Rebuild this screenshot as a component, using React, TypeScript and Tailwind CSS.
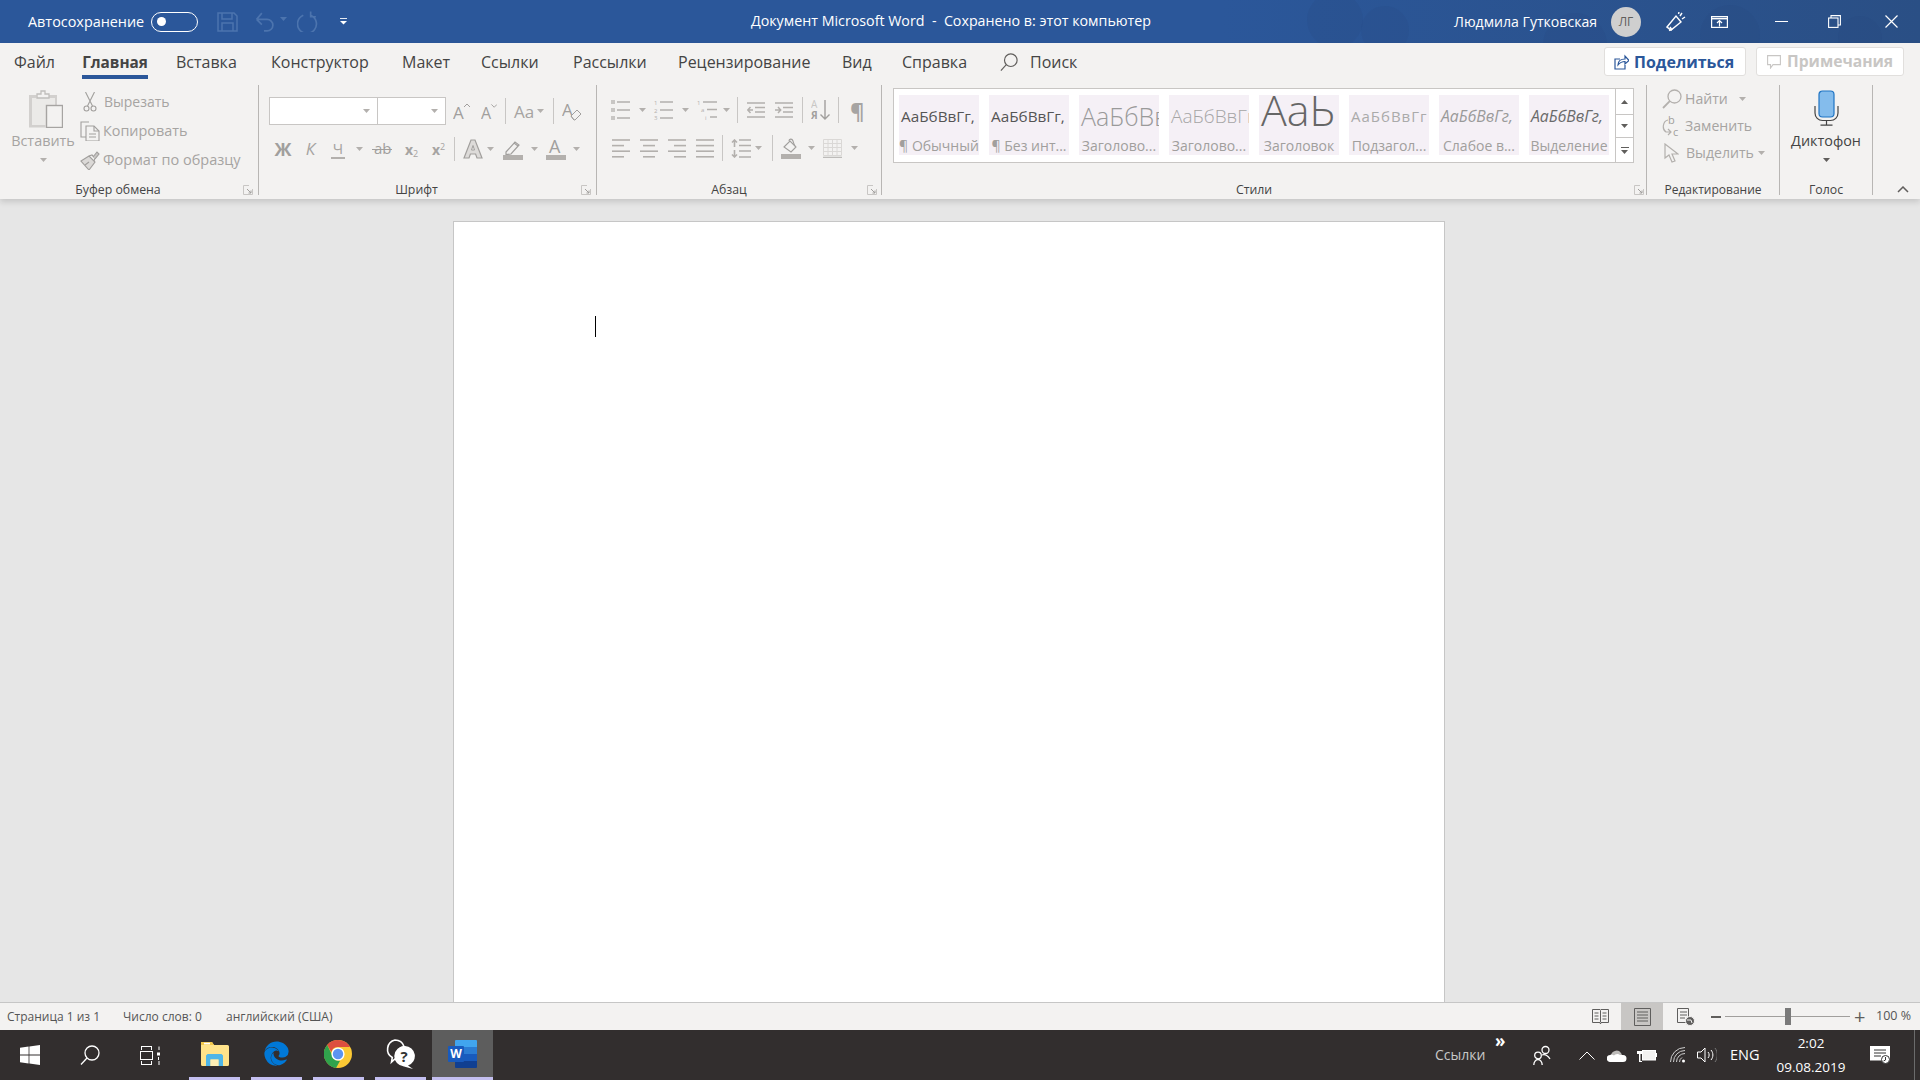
import React from "react";
import { FaEdge } from "react-icons/fa";

type P = { className?: string };
const G = "#b3b0ad";
const D = "#a19f9d";

function Caret({ className = "", color = G }: P & { color?: string }) {
  return (
    <svg viewBox="0 0 7 4" className={`w-[7px] h-[4px] shrink-0 ${className}`}>
      <path d="M0 0h7L3.5 4z" fill={color} />
    </svg>
  );
}
function Sep({ className = "" }: P) {
  return <i className={`block w-px bg-[#c8c6c4] shrink-0 ${className}`} />;
}
function Launcher({ className = "" }: P) {
  return (
    <svg viewBox="0 0 10 10" className={`absolute bottom-0 w-[10px] h-[10px] ${className}`} fill="none" stroke="#c8c6c4">
      <path d="M9.5 4V9.5H.5V.5H6" />
      <path d="M4 4l4 4M8 5.5V8H5.5" stroke="#a19f9d" />
    </svg>
  );
}

function Save({ className = "" }: P) {
  return (
    <svg viewBox="0 0 21 20" className={className} fill="none" stroke="#4c74ae" strokeWidth="1.5">
      <path d="M1 1h16l3 3v15H1z" />
      <path d="M5 1v6h10V1M5 19v-8h11v8" />
    </svg>
  );
}
function Undo({ className = "" }: P) {
  return (
    <svg viewBox="0 0 18 20" className={className} fill="none" stroke="#4c74ae" strokeWidth="1.6">
      <path d="M1 8h10a5.5 5.5 0 0 1 0 11H8M1 8l5-6M1 8l5 5" />
    </svg>
  );
}
function Redo({ className = "" }: P) {
  return (
    <svg viewBox="0 0 20 20" className={className} fill="none" stroke="#4c74ae" strokeWidth="1.6">
      <path d="M13 3.500a9 9 0 1 1-7 0M13 0v5h5" transform="translate(0 .5)" />
    </svg>
  );
}
function Customize({ className = "" }: P) {
  return (
    <svg viewBox="0 0 8 8" className={className} fill="#ffffff">
      <rect y="0" width="8" height="1" />
      <path d="M0 3.500h8L4 7.500z" />
    </svg>
  );
}
function Feedback({ className = "" }: P) {
  return (
    <svg viewBox="0 0 20 20" className={className} fill="none" stroke="#fff" strokeWidth="1.4">
      <path d="M1 15L10 4l5 6-10 8z" />
      <path d="M4 15l2 3M3 18.500l2-1" />
      <path d="M14 4l2-3M16 7l3-2M12.500 2l.5-2" />
    </svg>
  );
}
function RibbonDisplay({ className = "" }: P) {
  return (
    <svg viewBox="0 0 17 12" className={className} fill="none" stroke="#fff" strokeWidth="1.2">
      <rect x=".6" y=".6" width="15.800" height="10.800" />
      <path d="M.6 2.600h15.800" strokeWidth="1.6" />
      <path d="M8.500 10.500V4.500M6 7l2.500-2.500L11 7" />
    </svg>
  );
}
function Minimize({ className = "" }: P) {
  return <i className={`block bg-white ${className}`} />;
}
function Restore({ className = "" }: P) {
  return (
    <svg viewBox="0 0 13 13" className={className} fill="none" stroke="#fff" strokeWidth="1.1">
      <rect x=".6" y="3" width="9.400" height="9.400" />
      <path d="M3 3V.6h9.400V10H10" />
    </svg>
  );
}
function Close({ className = "" }: P) {
  return (
    <svg viewBox="0 0 13 13" className={className} fill="none" stroke="#fff" strokeWidth="1.2">
      <path d="M.5.5l12 12M12.500.5l-12 12" />
    </svg>
  );
}

function Clipboard({ className = "" }: P) {
  return (
    <svg viewBox="0 0 34 38" className={className} fill="none">
      <path d="M1.500 6.500h6M20 6.500h6.500V16" stroke="#d2d0ce" strokeWidth="3" />
      <path d="M1.500 5v31h15" stroke="#d2d0ce" strokeWidth="3" />
      <path d="M3 8h23v27H3z" fill="#ebeae8" />
      <path d="M8 6V4h4V1h4v3h4v4H8z" fill="#f3f2f1" stroke="#c0bebc" strokeWidth="1.3" />
      <rect x="17.500" y="15.500" width="16" height="22" fill="#f3f2f1" stroke="#a6a4a2" strokeWidth="1.4" />
    </svg>
  );
}
function Scissors({ className = "" }: P) {
  return (
    <svg viewBox="0 0 14 20" className={className} fill="none" stroke={D} strokeWidth="1.1">
      <path d="M2.500 0L9.500 14M11.500 0L4.500 14" />
      <circle cx="3.500" cy="16.500" r="2.500" />
      <circle cx="10.500" cy="16.500" r="2.500" />
    </svg>
  );
}
function Copy({ className = "" }: P) {
  return (
    <svg viewBox="0 0 20 20" className={className} fill="none" stroke={D} strokeWidth="1.1">
      <path d="M9 1H1v15h5" />
      <path d="M6 5h8l5 5v10H6z" fill="#f3f2f1" />
      <path d="M14 5v5h5M9 13h7M9 16h7" />
    </svg>
  );
}
function Painter({ className = "" }: P) {
  return (
    <svg viewBox="0 0 20 20" className={className} fill="none" stroke={D} strokeWidth="1.1">
      <path d="M1 11l8-5 6 6-6 8z" fill="#dbd9d7" />
      <path d="M5 15l4-3M9 6l3-1 3 3-1 3" />
      <path d="M13 7l4-5 2 2-4 5" fill="#c8c6c4" />
    </svg>
  );
}
function Eraser({ className = "" }: P) {
  return (
    <svg viewBox="0 0 20 20" className={className} fill="none" stroke={D}>
      <text x="0" y="15" fontSize="17" fill={D} stroke="none">A</text>
      <path d="M9 15l6-6 4 4-6 6h-1z" fill="#f3f2f1" />
      <path d="M9 15l3 4" />
    </svg>
  );
}
function GrowA({ up, className = "" }: P & { up?: boolean }) {
  return (
    <svg viewBox="0 0 17 18" className={className} fill="none" stroke={D}>
      <text x="0" y="17" fontSize="17" fill={D} stroke="none">A</text>
      <path d={up ? "M11 5l3-3 3 3" : "M11 2l3 3 3-3"} />
    </svg>
  );
}
function Strike({ className = "" }: P) {
  return (
    <svg viewBox="0 0 20 16" className={className} fill="none" stroke={D}>
      <text x="2" y="13" fontSize="15" fill={D} stroke="none">ab</text>
      <path d="M0 8.500h20" />
    </svg>
  );
}
function OutlineA({ className = "" }: P) {
  return (
    <svg viewBox="0 0 20 20" className={className}>
      <path d="M1 19L8 1h4l7 18h-5l-1.400-4H7.400L6 19z" fill="#dddbd9" stroke={D} strokeWidth="1.2" />
      <path d="M8.500 11h3L10 6.500z" fill="#f3f2f1" stroke={D} />
    </svg>
  );
}
function Highlight({ className = "" }: P) {
  return (
    <svg viewBox="0 0 20 21" className={className} fill="none" stroke={D} strokeWidth="1.2">
      <path d="M3 13L12 3l4 3-8 9-5 .5z" />
      <path d="M11 4l4 3" />
      <rect x="0" y="16" width="20" height="5" fill="#b3b0ad" stroke="none" />
    </svg>
  );
}
function ColorA({ className = "" }: P) {
  return (
    <svg viewBox="0 0 20 21" className={className}>
      <text x="3" y="14" fontSize="18" fill={D}>A</text>
      <rect x="0" y="16" width="20" height="5" fill="#b3b0ad" />
    </svg>
  );
}
function Bullets({ className = "" }: P) {
  return (
    <svg viewBox="0 0 19 20" className={className} fill="none" stroke={G} strokeWidth="1.5">
      <path d="M6 2h13M6 10h13M6 18h13" />
      <path d="M0 0h4v4H0zM0 8h4v4H0zM0 16h4v4H0z" fill="#c8c6c4" stroke="none" />
    </svg>
  );
}
function Numbered({ className = "" }: P) {
  return (
    <svg viewBox="0 0 19 20" className={className} fill="none" stroke={G} strokeWidth="1.5">
      <path d="M6 2h13M6 10h13M6 18h13" />
      <text x="0" y="5" fontSize="6" fill={G} stroke="none">1</text>
      <text x="0" y="13" fontSize="6" fill={G} stroke="none">2</text>
      <text x="0" y="20" fontSize="6" fill={G} stroke="none">3</text>
    </svg>
  );
}
function Multi({ className = "" }: P) {
  return (
    <svg viewBox="0 0 20 20" className={className} fill="none" stroke={G} strokeWidth="1.5">
      <path d="M6 2h14M10 9.500h10M13 17h7" />
      <text x="0" y="5" fontSize="6" fill={G} stroke="none">1</text>
      <text x="4" y="12" fontSize="6" fill={G} stroke="none">a</text>
      <text x="8" y="20" fontSize="6" fill={G} stroke="none">i</text>
    </svg>
  );
}
function Indent({ out, className = "" }: P & { out?: boolean }) {
  return (
    <svg viewBox="0 0 18 16" className={className} fill="none" stroke={G} strokeWidth="1.5">
      <path d="M0 1h18M8 5.500h10M8 10h10M0 15h18" />
      {out ? <path d="M6 8H1M3.500 5L.8 8l2.700 3" /> : <path d="M0 8h5.500M3 5l2.700 3L3 11" />}
    </svg>
  );
}
function Sort({ className = "" }: P) {
  return (
    <svg viewBox="0 0 19 22" className={className} fill="none" stroke={G} strokeWidth="1.4">
      <text x="0" y="9" fontSize="10" fill="#c8c6c4" stroke="none">А</text>
      <text x="0" y="20" fontSize="10" fontWeight="700" fill={D} stroke="none">Я</text>
      <path d="M14 1v19M9.500 15.500L14 20l4.500-4.500" stroke={D} />
    </svg>
  );
}
function Align({ lines, className = "" }: P & { lines: [number, number][] }) {
  return (
    <svg viewBox="0 0 18 19" className={className} fill="none" stroke={G} strokeWidth="1.6">
      {lines.map((l, i) => (
        <path key={i} d={`M${l[0]} ${1 + i * 5.6}H${l[1]}`} />
      ))}
    </svg>
  );
}
function Spacing({ className = "" }: P) {
  return (
    <svg viewBox="0 0 20 19" className={className} fill="none" stroke={G} strokeWidth="1.6">
      <path d="M8 1h12M8 6.500h12M8 12h12M8 18h12" />
      <path d="M3.500 1v7M1 3.500L3.500 1 6 3.500M3.500 11v7M1 15.500L3.500 18 6 15.500" />
    </svg>
  );
}
function Fill({ className = "" }: P) {
  return (
    <svg viewBox="0 0 20 21" className={className} fill="none" stroke={D} strokeWidth="1.1">
      <path d="M3 9l6-6 6 6-5 5z" fill="#f3f2f1" />
      <path d="M8 3c0-2 3-3 4 0 .5 1.500.7 3 2 5" />
      <rect x="0" y="16" width="20" height="5" fill="#b3b0ad" stroke="none" />
    </svg>
  );
}
function Borders({ className = "" }: P) {
  return (
    <svg viewBox="0 0 19 19" className={className} fill="none" stroke="#dad8d6" strokeWidth="1">
      <path d="M.5.5h18v16H.5zM9.500.5v16M.5 8.500h18M5 .5v16M14 .5v16M.5 4.500h18M.5 12.500h18" />
      <path d="M0 18.500h19" stroke="#bdbbb9" strokeWidth="1.6" />
    </svg>
  );
}
function Find({ className = "" }: P) {
  return (
    <svg viewBox="0 0 20 20" className={className} fill="none" stroke={G} strokeWidth="1.3">
      <circle cx="12.500" cy="7.500" r="6.500" />
      <path d="M7.800 12.200L1 19" strokeWidth="1.8" />
    </svg>
  );
}
function Replace({ className = "" }: P) {
  return (
    <svg viewBox="0 0 20 22" className={className} fill="none" stroke={G} strokeWidth="1.2">
      <text x="6" y="9" fontSize="11" fill={D} stroke="none">b</text>
      <text x="11" y="21" fontSize="11" fill={D} stroke="none">c</text>
      <path d="M6 5C1 6-.5 14 4 17h5M6 14l3 3-3 3" />
    </svg>
  );
}
function Select({ className = "" }: P) {
  return (
    <svg viewBox="0 0 15 20" className={className} fill="#f3f2f1" stroke={G} strokeWidth="1.2">
      <path d="M1 1v14l4-3 3 7 3-1-3-7h6z" />
    </svg>
  );
}
function Mic({ className = "" }: P) {
  return (
    <svg viewBox="0 0 25 36" className={className}>
      <rect x="5" y="1" width="15" height="26" rx="3.500" fill="#84bcec" stroke="#1f74c4" strokeWidth="1.2" />
      <path d="M1 16v7a7.500 7.500 0 0 0 7.500 7.500h8A7.500 7.500 0 0 0 24 23v-7M12.500 30.500V35M6.500 35.200h12" fill="none" stroke="#444" strokeWidth="1.2" />
    </svg>
  );
}

function SearchIco({ className = "", stroke = "#605e5c" }: P & { stroke?: string }) {
  return (
    <svg viewBox="0 0 20 20" className={className} fill="none" stroke={stroke} strokeWidth="1.3">
      <circle cx="12" cy="8" r="7" />
      <path d="M7 13L1 19.500" />
    </svg>
  );
}
function Share({ className = "" }: P) {
  return (
    <svg viewBox="0 0 15 16" className={className} fill="none" stroke="#2b579a" strokeWidth="1.2">
      <path d="M6 5H1v10h10v-4" />
      <path d="M4 11c0-4 3-6 7-6V2l4 4.500L11 10V7.500c-3 0-5 1-7 3.500z" />
    </svg>
  );
}
function Comment({ className = "" }: P) {
  return (
    <svg viewBox="0 0 14 14" className={className} fill="none" stroke="#c8c6c4" strokeWidth="1.1">
      <path d="M.6.6h12.800v9H6L3.500 13V9.600H.6z" />
    </svg>
  );
}

function ReadIco({ className = "" }: P) {
  return (
    <svg viewBox="0 0 17 16" className={className} fill="none" stroke="#5f5e5d">
      <path d="M.5.5h7.500l.5 1 .5-1h7.500v13H9l-.5 1.500L8 13.500H.5z" />
      <path d="M2.500 4h4M2.500 7h4M2.500 10h4M10.500 4h4M10.500 7h4M10.500 10h4M8.500 2v11" />
    </svg>
  );
}
function PrintIco({ className = "" }: P) {
  return (
    <svg viewBox="0 0 17 18" className={className} fill="none" stroke="#5f5e5d">
      <path d="M.5.5h16v17H.5z" />
      <path d="M3 4h11M3 7h11M3 10h11M3 13h11" />
    </svg>
  );
}
function WebIco({ className = "" }: P) {
  return (
    <svg viewBox="0 0 18 18" className={className} fill="none" stroke="#5f5e5d">
      <path d="M.5.5h11v14H.5zM3 4h7M3 7h7M3 10h5" />
      <circle cx="13" cy="13" r="4.500" fill="#5f5e5d" stroke="#f3f2f1" />
      <path d="M10 12h4l1 3" stroke="#f3f2f1" />
    </svg>
  );
}

function WinLogo({ className = "" }: P) {
  return (
    <svg viewBox="0 0 20 20" className={className} fill="#fff">
      <path d="M0 2.800l8.600-1.200v7.900H0zM9.400 1.500L20 0v9.500H9.400zM0 10.400h8.600v8L0 17.200zM9.400 10.400H20V20L9.400 18.500z" />
    </svg>
  );
}
function TaskView({ className = "" }: P) {
  return (
    <svg viewBox="0 0 20 19" className={className} fill="none" stroke="#fff" strokeWidth="1">
      <path d="M1 .5h11M1.500 0v4M11.500 0v4M1 18.500h11M1.500 15v4M11.500 15v4" />
      <rect x=".5" y="5.500" width="12" height="8" />
      <path d="M19 .5V4M19 15v4" />
      <rect x="17" y="6.500" width="3" height="3" fill="#fff" stroke="none" />
      <path d="M18.500 11v3" />
    </svg>
  );
}
function Explorer({ className = "" }: P) {
  return (
    <svg viewBox="0 0 28 24" className={className}>
      <path d="M0 1.500A1.500 1.500 0 0 1 1.500 0H11l2 3h13.500A1.500 1.500 0 0 1 28 4.500V22.500a1.500 1.500 0 0 1-1.500 1.500h-25A1.500 1.500 0 0 1 0 22.500z" fill="#ffe38a" />
      <path d="M0 0h11l2 3H0z" fill="#f3c94d" />
      <path d="M3 .8h6v1.600H3z" fill="#fff" />
      <path d="M5 24V13.500l1.500-1.500h14L22 13.500V24h-4.500v-6.500H9.500V24z" fill="#4fb6e8" />
      <path d="M9.500 17.500h8V24h-8z" fill="#fff0b5" />
    </svg>
  );
}
function Chrome({ className = "" }: P) {
  return (
    <svg viewBox="0 0 28 28" className={className}>
      <circle cx="14" cy="14" r="14" fill="#fcc934" />
      <path d="M14 0a14 14 0 0 1 12.100 7H14a7 7 0 0 0-6.700 5L3.200 5A14 14 0 0 1 14 0z" fill="#dd4f3f" />
      <path d="M3.200 5l5.900 12a6.500 6.500 0 0 0 7 3.700L12 28A14 14 0 0 1 3.200 5z" fill="#30a24c" />
      <circle cx="14" cy="14" r="6.600" fill="#fff" />
      <circle cx="14" cy="14" r="5.200" fill="#5c94f0" />
    </svg>
  );
}
function Hub({ className = "" }: P) {
  return (
    <svg viewBox="0 0 30 30" className={className}>
      <path d="M10 1a9.500 9.500 0 0 1 9 6.500A10 10 0 0 0 11 19l-4.500 4 .8-4.500A9.500 9.500 0 0 1 10 1z" fill="none" stroke="#fff" strokeWidth="1.6" />
      <path d="M20 7a10 10 0 0 1 3 19.500l5 3.500-9-2.600A10.200 10.200 0 0 1 20 7z" fill="#fff" />
      <text x="15.500" y="23" fontSize="15" fontWeight="700" fill="#333">?</text>
    </svg>
  );
}
function WordLogo({ className = "" }: P) {
  return (
    <div className={`relative shrink-0 ${className}`}>
      <div className="absolute right-0 top-0 w-[22px] h-full rounded-[1px] overflow-hidden flex flex-col">
        <i className="block flex-1 bg-[#41a5ee]" />
        <i className="block flex-1 bg-[#2b7cd3]" />
        <i className="block flex-1 bg-[#185abd]" />
        <i className="block flex-1 bg-[#103f91]" />
      </div>
      <div className="absolute left-0 top-[6px] w-[16px] h-[16px] rounded-[1px] bg-[#185abd] text-white text-[12px] leading-[16px] font-bold text-center">W</div>
    </div>
  );
}
function People({ className = "" }: P) {
  return (
    <svg viewBox="0 0 18 20" className={className} fill="none" stroke="#fff" strokeWidth="1.3">
      <circle cx="12.500" cy="5" r="3.500" />
      <path d="M9 10c3-1 6 1 8 4" />
      <circle cx="5" cy="10.500" r="3.300" />
      <path d="M.8 20c0-3 2-5.500 4.200-5.500S9.200 17 9.200 20" />
    </svg>
  );
}
function OneDrive({ className = "" }: P) {
  return (
    <svg viewBox="0 0 20 13" className={className}>
      <path d="M4 7a5.500 5.500 0 0 1 10-3 4.500 4.500 0 0 1 1 3z" fill="#bdbbb9" />
      <path d="M3.500 13a3.500 3.500 0 0 1-.5-7c.5-.5 2-1 4 .5C8 5 11 4 13 6h3a3.500 3.500 0 0 1 0 7z" fill="#fff" />
    </svg>
  );
}
function Battery({ className = "" }: P) {
  return (
    <svg viewBox="0 0 20 14" className={className}>
      <path d="M1 0v3M4 0v3M0 3h5v3H3.500v7H5v1H2v-8H0z" fill="#fff" />
      <rect x="5.500" y="2.500" width="13" height="9.500" fill="#f3f2f1" stroke="#fff" />
      <rect x="19" y="5" width="1" height="4" fill="#fff" />
    </svg>
  );
}
function Wifi({ className = "" }: P) {
  return (
    <svg viewBox="0 0 16 16" className={className} fill="none" stroke="#cfcfcf">
      <path d="M.5 15A14.500 14.500 0 0 1 15 .5M3.500 15A11.500 11.500 0 0 1 15 3.500M6.500 15A8.500 8.500 0 0 1 15 6.500M9.500 15A5.500 5.500 0 0 1 12 10.500" />
      <circle cx="13.500" cy="14" r="1.500" fill="#fff" stroke="none" />
    </svg>
  );
}
function Sound({ className = "" }: P) {
  return (
    <svg viewBox="0 0 20 16" className={className} fill="none" stroke="#fff">
      <path d="M.5 5H4l4-4v14l-4-4H.5z" />
      <path d="M11 5c1.500 1.500 1.500 4.500 0 6" />
      <path d="M14 3c2.500 3 2.500 7 0 10" />
      <path d="M18 1c3 4 3 10 0 14" stroke="#777" />
    </svg>
  );
}
function Notify({ className = "" }: P) {
  return (
    <svg viewBox="0 0 20 18" className={className}>
      <path d="M0 0h20v14.500H0z" fill="#fff" />
      <path d="M4 4h12M4 7h12M4 10h7" stroke="#333" fill="none" />
      <circle cx="15.500" cy="13.500" r="4" fill="#fff" stroke="#333" />
      <path d="M15.500 11v3l-2 1" stroke="#333" fill="none" />
    </svg>
  );
}

const tabs: [string, string][] = [
  ["Файл", "w-[68px]"],
  ["Вставка", "w-[95px]"],
  ["Конструктор", "w-[131px]"],
  ["Макет", "w-[79px]"],
  ["Ссылки", "w-[92px]"],
  ["Рассылки", "w-[105px]"],
  ["Рецензирование", "w-[164px]"],
  ["Вид", "w-[60px]"],
  ["Справка", "w-[98px]"],
];

function Tab({ label, w }: { label: string; w: string }) {
  return <div className={`${w} h-[37px] leading-[38px] shrink-0 whitespace-nowrap`}>{label}</div>;
}

function GroupLabel({ children, className = "" }: { children: React.ReactNode; className?: string }) {
  return <div className={`h-[10px] leading-[10px] text-center text-[12.3px] text-[#444444] whitespace-nowrap ${className}`}>{children}</div>;
}

const styles = [
  { p: "АаБбВвГг, ", c: "text-[15.300px] leading-[42px] text-[#555555]", l: "¶ Обычный" },
  { p: "АаБбВвГг, ", c: "text-[15.300px] leading-[42px] text-[#555555]", l: "¶ Без инт..." },
  { p: "АаБбВвГг", c: "text-[25px] leading-[42px] font-light text-[#9a9a9a]", l: "Заголово..." },
  { p: "АаБбВвГг", c: "text-[19px] leading-[42px] font-light text-[#a5a5a5]", l: "Заголово..." },
  { p: "АаЬ", c: "text-[43px] leading-[30px] font-light text-[#666666]", l: "Заголовок" },
  { p: "АаБбВвГг", c: "text-[15px] leading-[42px] tracking-[1px] text-[#aaaaaa]", l: "Подзагол..." },
  { p: "АаБбВвГг, ", c: "text-[15.800px] leading-[42px] italic text-[#9a9a9a]", l: "Слабое в..." },
  { p: "АаБбВвГг, ", c: "text-[15.800px] leading-[42px] italic text-[#6a6a6a]", l: "Выделение" },
];

const alignL: [number, number][] = [[0, 18], [0, 12], [0, 18], [0, 12]];
const alignC: [number, number][] = [[0, 18], [3, 15], [0, 18], [3, 15]];
const alignR: [number, number][] = [[0, 18], [6, 18], [0, 18], [6, 18]];
const alignJ: [number, number][] = [[0, 18], [0, 18], [0, 18], [0, 18]];

export default function App() {
  return (
    <div className="w-[1920px] h-[1080px] flex flex-col overflow-hidden font-['Open_Sans','Noto_Sans',sans-serif]">
      {/* Title bar */}
      <header className="relative h-[43px] shrink-0 bg-[#2b579a] flex items-center text-white overflow-hidden">
        <div className="absolute inset-y-0 right-0 w-[700px] bg-gradient-to-r from-[#2b579a] to-[#2a4f85]" />
        <svg className="absolute inset-0 w-full h-full" viewBox="0 0 1920 43" fill="#24477e" fillOpacity="0.16">
          <circle cx="1335" cy="20" r="28" />
          <circle cx="1385" cy="30" r="24" />
          <circle cx="1575" cy="45" r="32" />
          <circle cx="1730" cy="35" r="30" />
          <circle cx="1860" cy="38" r="22" />
        </svg>
        <div className="relative flex items-center w-full h-full">
          <span className="ml-[28px] w-[118px] text-[14.400px] whitespace-nowrap">Автосохранение</span>
          <span className="ml-[5px] w-[47px] h-[20px] rounded-full border border-white flex items-center pl-[5px]">
            <i className="block w-[9px] h-[9px] rounded-full bg-white" />
          </span>
          <Save className="ml-[19px] w-[21px] h-[20px]" />
          <Undo className="ml-[17px] w-[20px] h-[21px]" />
          <Caret className="ml-[5px] -mt-[5px]" color="#4c74ae" />
          <Redo className="ml-[10px] w-[21px] h-[21px]" />
          <Customize className="ml-[22px] w-[7px] h-[7px]" />
          <span className="ml-[403px] w-[402px] -mt-[2px] text-center text-[14.250px] whitespace-nowrap">Документ Microsoft Word&nbsp; -&nbsp; Сохранено в: этот компьютер</span>
          <span className="ml-[302px] w-[143px] text-[14.100px] whitespace-nowrap text-right">Людмила Гутковская</span>
          <span className="ml-[14px] w-[30px] h-[30px] rounded-full bg-[#cfcfcf] text-[#605e5c] text-[12px] flex items-center justify-center">ЛГ</span>
          <Feedback className="ml-[25px] w-[20px] h-[20px]" />
          <RibbonDisplay className="ml-[25px] w-[17px] h-[12px]" />
          <Minimize className="ml-[47px] w-[13px] h-px" />
          <Restore className="ml-[40px] w-[13px] h-[13px]" />
          <Close className="ml-[44px] w-[13px] h-[13px]" />
        </div>
      </header>

      {/* Ribbon */}
      <div className="relative z-10 shrink-0 h-[156px] bg-[#f3f2f1] shadow-[0_3px_6px_rgba(0,0,0,0.14)]">
        <nav className="flex items-start h-[37px] pl-[14px] text-[16px] text-[#444444]">
          <Tab label={tabs[0][0]} w={tabs[0][1]} />
          <div className="w-[94px] shrink-0">
            <div className="w-[66px] h-[36px] leading-[38px] text-[15.300px] font-bold text-center border-b-[4px] border-[#2b579a] whitespace-nowrap">Главная</div>
          </div>
          {tabs.slice(1).map((t) => (
            <Tab key={t[0]} label={t[0]} w={t[1]} />
          ))}
          <div className="w-[30px] h-[37px] flex items-center shrink-0">
            <SearchIco className="w-[18px] h-[18px]" />
          </div>
          <div className="leading-[38px]">Поиск</div>
          <div className="ml-auto flex pt-[4px] pr-[16px]">
            <button className="w-[142px] h-[29px] bg-white border border-[#e1dfdd] rounded-[3px] flex items-center pl-[9px] text-[16px] font-bold text-[#2b579a] whitespace-nowrap">
              <Share className="w-[15px] h-[16px] mr-[5px]" />
              Поделиться
            </button>
            <button className="ml-[10px] w-[148px] h-[29px] bg-white border border-[#e1dfdd] rounded-[3px] flex items-center pl-[10px] text-[15.700px] font-bold text-[#c8c6c4] whitespace-nowrap">
              <Comment className="w-[14px] h-[14px] mr-[6px]" />
              Примечания
            </button>
          </div>
        </nav>

        <div className="flex h-[119px] pt-[5px] pb-[4px] text-[14.400px] text-[#a6a4a2]">
          {/* Clipboard */}
          <section className="relative w-[259px] shrink-0 flex flex-col border-r border-[#b8b6b4]">
            <div className="flex h-[100px]">
              <div className="ml-[6px] w-[74px] shrink-0 flex flex-col items-center">
                <Clipboard className="mt-[5px] ml-[6px] w-[34px] h-[38px]" />
                <span className="mt-[4px] leading-[18px]">Вставить</span>
                <Caret className="mt-[8px]" />
              </div>
              <div className="pt-[2px] flex flex-col whitespace-nowrap">
                <div className="h-[29px] flex items-center text-[14px]">
                  <span className="w-[24px] flex pl-[3px]"><Scissors className="w-[14px] h-[20px]" /></span>
                  Вырезать
                </div>
                <div className="h-[29px] flex items-center">
                  <span className="w-[23px] flex"><Copy className="w-[20px] h-[20px]" /></span>
                  Копировать
                </div>
                <div className="h-[29px] flex items-center text-[14.500px]">
                  <span className="w-[23px] flex"><Painter className="w-[20px] h-[20px]" /></span>
                  Формат по образцу
                </div>
              </div>
            </div>
            <GroupLabel className="pr-[22px]">Буфер обмена</GroupLabel>
            <Launcher className="right-[5px]" />
          </section>

          {/* Font */}
          <section className="relative w-[338px] shrink-0 flex flex-col border-r border-[#b8b6b4]">
            <div className="h-[100px]">
              <div className="mt-[12px] h-[28px] flex items-center">
                <div className="ml-[10px] w-[109px] h-[28px] bg-white border border-[#c8c6c4] flex items-center justify-end pr-[7px]"><Caret /></div>
                <div className="-ml-px w-[69px] h-[28px] bg-white border border-[#c8c6c4] flex items-center justify-end pr-[7px]"><Caret /></div>
                <GrowA up className="ml-[7px] w-[17px] h-[18px]" />
                <GrowA className="ml-[11px] w-[16px] h-[18px]" />
                <Sep className="ml-[8px] h-[26px]" />
                <span className="ml-[8px] w-[20px] text-[17px] leading-none">Aa</span>
                <Caret className="ml-[3px]" />
                <Sep className="ml-[9px] h-[26px]" />
                <Eraser className="ml-[8px] w-[20px] h-[20px]" />
              </div>
              <div className="mt-[10px] h-[28px] flex items-center">
                <span className="ml-[15px] w-[18px] text-[18px] font-bold text-center text-[#a19f9d]">Ж</span>
                <span className="ml-[13px] w-[11px] text-[17px] italic text-center">К</span>
                <span className="ml-[15px] w-[14px] text-[15px] leading-[18px] text-center border-b-2 border-[#b3b0ad]">Ч</span>
                <Caret className="ml-[11px]" />
                <Strike className="ml-[9px] w-[20px] h-[16px]" />
                <span className="ml-[13px] w-[13px] text-[14px] font-bold">x<sub className="text-[9px] font-normal">2</sub></span>
                <span className="ml-[14px] w-[13px] text-[14px] font-bold">x<sup className="text-[9px] font-normal">2</sup></span>
                <Sep className="ml-[9px] h-[24px]" />
                <OutlineA className="ml-[8px] w-[20px] h-[20px]" />
                <Caret className="ml-[4px]" />
                <Highlight className="ml-[9px] w-[20px] h-[21px]" />
                <Caret className="ml-[8px]" />
                <ColorA className="ml-[8px] w-[20px] h-[21px]" />
                <Caret className="ml-[7px]" />
              </div>
            </div>
            <GroupLabel className="pr-[22px]">Шрифт</GroupLabel>
            <Launcher className="right-[5px]" />
          </section>

          {/* Paragraph */}
          <section className="relative w-[285px] shrink-0 flex flex-col border-r border-[#b8b6b4]">
            <div className="h-[100px]">
              <div className="mt-[11px] h-[28px] flex items-center">
                <Bullets className="ml-[14px] w-[19px] h-[20px]" />
                <Caret className="ml-[9px]" />
                <Numbered className="ml-[8px] w-[19px] h-[20px]" />
                <Caret className="ml-[9px]" />
                <Multi className="ml-[8px] w-[20px] h-[20px]" />
                <Caret className="ml-[6px]" />
                <Sep className="ml-[7px] h-[26px]" />
                <Indent out className="ml-[9px] w-[18px] h-[16px]" />
                <Indent className="ml-[10px] w-[18px] h-[16px]" />
                <Sep className="ml-[9px] h-[26px]" />
                <Sort className="ml-[8px] w-[19px] h-[22px]" />
                <Sep className="ml-[8px] h-[26px]" />
                <span className="ml-[11px] w-[14px] text-[22px] leading-none font-bold">¶</span>
              </div>
              <div className="mt-[10px] h-[28px] flex items-center">
                <Align lines={alignL} className="ml-[15px] w-[18px] h-[19px]" />
                <Align lines={alignC} className="ml-[10px] w-[18px] h-[19px]" />
                <Align lines={alignR} className="ml-[10px] w-[18px] h-[19px]" />
                <Align lines={alignJ} className="ml-[10px] w-[18px] h-[19px]" />
                <Sep className="ml-[8px] h-[26px]" />
                <Spacing className="ml-[8px] w-[20px] h-[19px]" />
                <Caret className="ml-[4px]" />
                <Sep className="ml-[10px] h-[26px]" />
                <Fill className="ml-[8px] w-[20px] h-[21px]" />
                <Caret className="ml-[7px]" />
                <Borders className="ml-[8px] w-[19px] h-[19px]" />
                <Caret className="ml-[9px]" />
              </div>
            </div>
            <GroupLabel className="pr-[20px]">Абзац</GroupLabel>
            <Launcher className="right-[4px]" />
          </section>

          {/* Styles */}
          <section className="relative w-[765px] shrink-0 flex flex-col border-r border-[#b8b6b4]">
            <div className="h-[100px]">
              <div className="ml-[11px] mt-[3px] w-[741px] h-[75px] bg-white border border-[#c8c6c4] flex">
                <div className="flex-1 flex gap-[10px] pl-[5px] pt-[6px]">
                  {styles.map((s, i) => (
                    <div key={i} className="w-[80px] h-[60px] bg-[#f5f0f6] overflow-hidden shrink-0">
                      <div className={`h-[40px] pl-[2px] whitespace-nowrap overflow-hidden ${s.c}`}>{s.p}</div>
                      <div className="h-[20px] mt-px leading-[20px] text-center text-[14px] text-[#a19f9d] whitespace-nowrap">{s.l}</div>
                    </div>
                  ))}
                </div>
                <div className="w-[18px] border-l border-[#c8c6c4] flex flex-col">
                  <div className="h-[25px] flex items-center justify-center"><Caret className="rotate-180" color="#605e5c" /></div>
                  <div className="h-[24px] flex items-center justify-center border-y border-[#c8c6c4]"><Caret color="#605e5c" /></div>
                  <div className="flex-1 flex flex-col items-center justify-center gap-[2px]"><i className="block w-[8px] h-px bg-[#605e5c]" /><Caret color="#605e5c" /></div>
                </div>
              </div>
            </div>
            <GroupLabel className="pr-[20px]">Стили</GroupLabel>
            <Launcher className="right-[2px]" />
          </section>

          {/* Editing */}
          <section className="relative w-[133px] shrink-0 flex flex-col border-r border-[#b8b6b4]">
            <div className="h-[100px] pl-[15px] whitespace-nowrap text-[14.100px]">
              <div className="h-[27px] flex items-center">
                <span className="w-[23px] flex"><Find className="w-[20px] h-[20px]" /></span>
                Найти
                <Caret className="ml-[11px]" />
              </div>
              <div className="h-[27px] flex items-center">
                <span className="w-[23px] flex"><Replace className="w-[20px] h-[22px]" /></span>
                Заменить
              </div>
              <div className="h-[27px] flex items-center">
                <span className="w-[24px] flex pl-[2px]"><Select className="w-[15px] h-[20px]" /></span>
                Выделить
                <Caret className="ml-[4px]" />
              </div>
            </div>
            <GroupLabel className="text-[12px]">Редактирование</GroupLabel>
          </section>

          {/* Voice */}
          <section className="relative w-[93px] shrink-0 flex flex-col border-r border-[#b8b6b4]">
            <div className="h-[100px] flex flex-col items-center text-[#444444]">
              <Mic className="mt-[5px] w-[25px] h-[36px]" />
              <span className="mt-[6px] leading-[18px]">Диктофон</span>
              <Caret className="mt-[8px]" color="#605e5c" />
            </div>
            <GroupLabel>Голос</GroupLabel>
          </section>

          <div className="flex-1 flex items-end justify-end pr-[11px] pb-[2px]">
            <svg viewBox="0 0 12 7" className="w-[12px] h-[7px]" fill="none" stroke="#605e5c" strokeWidth="1.5"><path d="M1 6l5-5 5 5" /></svg>
          </div>
        </div>
      </div>

      {/* Canvas */}
      <main className="flex-1 min-h-0 bg-[#e6e6e6] pt-[22px] pl-[453px] overflow-hidden">
        <div className="w-[992px] h-full bg-white border-x border-t border-[#c6c6c6] pt-[94px] pl-[141px]">
          <i className="block w-px h-[21px] bg-black" />
        </div>
      </main>

      {/* Status bar */}
      <footer className="h-[28px] shrink-0 bg-[#f3f2f1] border-t border-[#c6c6c6] flex items-center text-[12px] text-[#555555] whitespace-nowrap">
        <span className="ml-[7px] w-[116px]">Страница 1 из 1</span>
        <span className="w-[103px]">Число слов: 0</span>
        <span>английский (США)</span>
        <ReadIco className="ml-auto w-[17px] h-[16px]" />
        <div className="ml-[12px] w-[42px] h-full bg-[#c8c6c4] flex items-center justify-center"><PrintIco className="w-[17px] h-[18px]" /></div>
        <WebIco className="ml-[14px] w-[18px] h-[18px]" />
        <i className="block ml-[16px] w-[10px] h-[2px] bg-[#605e5c]" />
        <div className="relative ml-[4px] w-[125px] h-px bg-[#a19f9d]">
          <i className="absolute left-[60px] -top-[8px] block w-[6px] h-[17px] bg-[#7a7a7a]" />
        </div>
        <span className="ml-[4px] text-[20px] leading-none w-[11px] text-center text-[#605e5c]">+</span>
        <span className="ml-[11px] w-[44px] text-[12.500px]">100 %</span>
      </footer>

      {/* Taskbar */}
      <footer className="h-[50px] shrink-0 bg-[#322e2e] flex items-center text-white whitespace-nowrap">
        <WinLogo className="ml-[20px] w-[20px] h-[20px]" />
        <SearchIco stroke="#ffffff" className="ml-[40px] w-[20px] h-[20px]" />
        <TaskView className="ml-[40px] w-[20px] h-[19px]" />
        <div className="ml-[29px] w-[51px] h-full flex justify-center items-center border-b-[3px] border-[#c4bff0]"><Explorer className="w-[28px] h-[24px]" /></div>
        <div className="ml-[11px] w-[51px] h-full flex justify-center items-center border-b-[3px] border-[#c4bff0]"><FaEdge className="w-[25px] h-[25px] text-[#0078d7]" /></div>
        <div className="ml-[11px] w-[51px] h-full flex justify-center items-center border-b-[3px] border-[#c4bff0]"><Chrome className="w-[28px] h-[28px] -ml-[2px]" /></div>
        <div className="ml-[11px] w-[51px] h-full flex justify-center items-center border-b-[3px] border-[#c4bff0]"><Hub className="w-[30px] h-[30px] -ml-[2px]" /></div>
        <div className="ml-[6px] w-[61px] h-full bg-[#5d5d5d] flex justify-center items-center border-b-[3px] border-[#c4bff0]"><WordLogo className="w-[29px] h-[28px]" /></div>
        <span className="ml-[942px] w-[50px] -mt-[2px] text-[14px] text-[#c8c8c8]">Ссылки</span>
        <span className="ml-[10px] w-[10px] -mt-[29px] text-[17px] leading-none font-bold">»</span>
        <People className="ml-[28px] w-[18px] h-[20px]" />
        <svg viewBox="0 0 16 9" className="ml-[28px] w-[16px] h-[9px]" fill="none" stroke="#fff"><path d="M.5 8.500L8 1l7.500 7.500" /></svg>
        <OneDrive className="ml-[12px] w-[20px] h-[13px]" />
        <Battery className="ml-[10px] w-[20px] h-[14px]" />
        <Wifi className="ml-[13px] w-[16px] h-[16px]" />
        <Sound className="ml-[11px] w-[20px] h-[16px]" />
        <span className="ml-[13px] w-[30px] text-[14.500px]">ENG</span>
        <div className="ml-[15px] w-[72px] text-[13.500px] text-center flex flex-col gap-[6px]">
          <span className="leading-[18px]">2:02</span>
          <span className="leading-[18px]">09.08.2019</span>
        </div>
        <Notify className="ml-[23px] w-[20px] h-[18px]" />
        <i className="block ml-[24px] w-px h-full bg-[#6b6b6b]" />
      </footer>
    </div>
  );
}
